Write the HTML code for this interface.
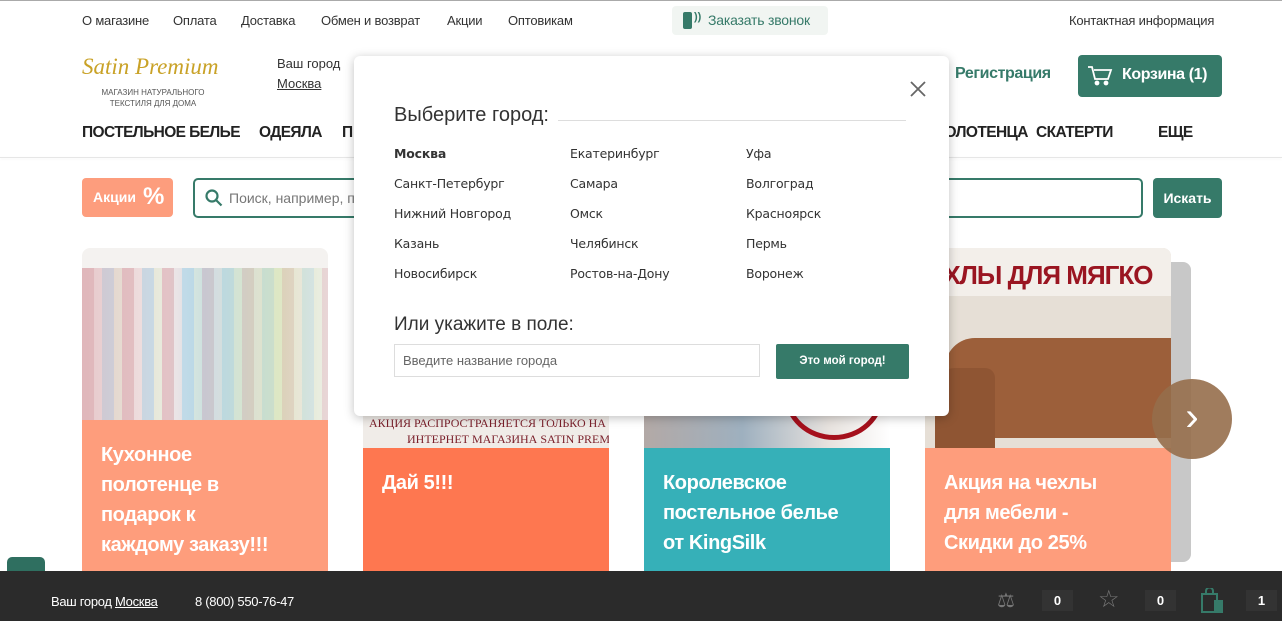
<!DOCTYPE html>
<html><head><meta charset="utf-8"><style>
*{margin:0;padding:0;box-sizing:border-box}
body{width:1282px;height:621px;overflow:hidden;position:relative;background:#fff;font-family:"Liberation Sans",sans-serif;color:#333}
.a{position:absolute;white-space:nowrap}
.top{font-size:13px;color:#333;top:13px;letter-spacing:-0.2px}
.nav{font-size:15.5px;font-weight:bold;color:#222;top:124px;letter-spacing:-0.6px}
.card{position:absolute;top:248px;width:246px;height:330px;border-radius:8px 8px 0 0;overflow:hidden}
.card .t{position:absolute;left:0;right:0;bottom:0;color:#fff;font-weight:bold;font-size:20px;line-height:30px;padding:20px 19px;letter-spacing:-0.4px;white-space:nowrap}
.city{position:absolute;font-family:"DejaVu Sans",sans-serif;font-size:12.5px;color:#333;white-space:nowrap;letter-spacing:-0.2px}
</style></head><body>
<div class="a" style="left:0;top:0;width:1282px;height:1px;background:#aaa"></div>
<div class="a top" style="left:82px">О магазине</div>
<div class="a top" style="left:173px">Оплата</div>
<div class="a top" style="left:241px">Доставка</div>
<div class="a top" style="left:321px">Обмен и возврат</div>
<div class="a top" style="left:447px">Акции</div>
<div class="a top" style="left:508px">Оптовикам</div>
<div class="a" style="left:672px;top:6px;width:156px;height:29px;background:#f1f5f2;border-radius:4px"></div>
<div class="a" style="left:683px;top:12px;width:9px;height:17px;background:#367a69;border-radius:2px"></div>
<div class="a" style="left:694px;top:11px;font-size:11px;color:#367a69;font-weight:bold">))</div>
<div class="a top" style="left:708px;color:#367a69;font-size:14px;top:12px">Заказать звонок</div>
<div class="a top" style="left:1069px">Контактная информация</div>

<div class="a" style="left:82px;top:54px;font-family:'Liberation Serif',serif;font-style:italic;font-size:23px;color:#c9a227">Satin Premium</div>
<div class="a" style="left:82px;top:87px;width:142px;text-align:center;font-size:8px;line-height:11px;color:#555">МАГАЗИН НАТУРАЛЬНОГО<br>ТЕКСТИЛЯ ДЛЯ ДОМА</div>
<div class="a" style="left:277px;top:56px;font-size:13px">Ваш город</div>
<div class="a" style="left:277px;top:76px;font-size:13px;text-decoration:underline">Москва</div>
<div class="a" style="left:955px;top:65px;font-size:16px;font-weight:bold;color:#367a69;letter-spacing:-0.4px">Регистрация</div>
<div class="a" style="left:1078px;top:55px;width:144px;height:42px;background:#367a69;border-radius:4px"></div>
<svg class="a" style="left:1087px;top:65px" width="26" height="22" viewBox="0 0 26 22" fill="none" stroke="#fff" stroke-width="1.8"><path d="M1 2h4l3 12h13l3-9H7"/><circle cx="10" cy="18" r="1.5" fill="#fff"/><circle cx="19" cy="18" r="1.5" fill="#fff"/></svg>
<div class="a" style="left:1122px;top:66px;font-size:16px;font-weight:bold;color:#fff;letter-spacing:-0.4px">Корзина (1)</div>

<div class="a nav" style="left:82px">ПОСТЕЛЬНОЕ БЕЛЬЕ</div>
<div class="a nav" style="left:259px">ОДЕЯЛА</div>
<div class="a nav" style="left:342px">П</div>
<div class="a nav" style="left:934px">ПОЛОТЕНЦА</div>
<div class="a nav" style="left:1036px">СКАТЕРТИ</div>
<div class="a nav" style="left:1158px">ЕЩЕ</div>
<div class="a" style="left:0;top:157px;width:1282px;height:1px;background:#e6e6e6;box-shadow:0 1px 3px rgba(0,0,0,.06)"></div>

<div class="a" style="left:82px;top:178px;width:91px;height:39px;background:#fd9d7d;border-radius:4px"></div>
<div class="a" style="left:93px;top:189px;font-size:14px;font-weight:bold;color:#fff">Акции</div>
<div class="a" style="left:143px;top:183px;font-size:24px;font-weight:bold;color:#fff">%</div>
<div class="a" style="left:193px;top:178px;width:950px;height:40px;border:2px solid #367a69;border-radius:5px"></div>
<svg class="a" style="left:205px;top:189px" width="18" height="18" viewBox="0 0 18 18" fill="none" stroke="#367a69" stroke-width="2.2"><circle cx="7" cy="7" r="5.5"/><path d="M11 11l5.5 5.5"/></svg>
<div class="a" style="left:229px;top:190px;font-size:14px;color:#777">Поиск, например, п</div>
<div class="a" style="left:1153px;top:178px;width:69px;height:40px;background:#367a69;border-radius:4px;color:#fff;font-size:14px;font-weight:bold;text-align:center;line-height:40px">Искать</div>

<div class="card" style="left:82px;background:#f4f2f0"><div class="a" style="left:0;top:20px;width:246px;height:152px;background:repeating-linear-gradient(90deg,#e3c3c6 0 12px,#f1e6e6 12px 20px,#c7dde9 20px 32px,#e9edde 32px 40px)"></div><div class="a" style="left:0;top:20px;width:246px;height:152px;background:linear-gradient(90deg,rgba(220,170,175,.5),rgba(255,255,255,0) 35%,rgba(160,205,225,.4) 50%,rgba(210,225,170,.5) 80%,rgba(240,240,240,.4))"></div><div class="t" style="top:172px;background:#fe9d7c">Кухонное<br>полотенце в<br>подарок к<br>каждому заказу!!!</div></div>
<div class="card" style="left:363px;background:#f0ece8"><div class="a" style="left:6px;top:168px;font-family:'Liberation Serif',serif;font-size:12px;color:#7a1f2a">АКЦИЯ РАСПРОСТРАНЯЕТСЯ ТОЛЬКО НА КЛИ</div><div class="a" style="left:44px;top:184px;font-family:'Liberation Serif',serif;font-size:12px;color:#7a1f2a">ИНТЕРНЕТ МАГАЗИНА SATIN PREMIUM</div><div class="t" style="top:200px;background:#fe7750">Дай 5!!!</div></div>
<div class="card" style="left:644px;background:linear-gradient(90deg,#b3a9a6,#9eb0bf 40%,#e7e2de 75%,#fff)"><div class="a" style="left:140px;top:100px;width:100px;height:92px;border:5px solid #a5101c;border-radius:50%"></div><div class="t" style="top:200px;background:#36b0b8">Королевское<br>постельное белье<br>от KingSilk</div></div>
<div class="a" style="left:1171px;top:262px;width:20px;height:300px;background:#c8c8c8;border-radius:0 8px 8px 0"></div>
<div class="card" style="left:925px;background:#e6dfd6"><div class="a" style="left:0;top:0;width:246px;height:48px;background:#f3efea"></div><div class="a" style="left:2px;top:12px;font-size:26px;font-weight:bold;color:#9a1521;letter-spacing:-1px">ЕХЛЫ ДЛЯ МЯГКО</div><div class="a" style="left:20px;top:90px;width:226px;height:100px;background:#9c5f3a;border-radius:30px 0 0 0"></div><div class="a" style="left:10px;top:120px;width:60px;height:80px;background:#8f5533;border-radius:20px 10px 0 0"></div><div class="t" style="top:200px;background:#fe9d7c">Акция на чехлы<br>для мебели -<br>Скидки до 25%</div></div>
<div class="a" style="left:1152px;top:379px;width:80px;height:80px;border-radius:50%;background:rgba(150,110,75,.9);color:#fff;font-size:40px;text-align:center;line-height:76px">&#x203A;</div>

<div class="a" style="left:7px;top:557px;width:38px;height:20px;background:#2f6f60;border-radius:5px 5px 0 0"></div>
<div class="a" style="left:0;top:571px;width:1282px;height:50px;background:#2b2b2b"></div>
<div class="a" style="left:51px;top:594px;font-size:13px;color:#fff;letter-spacing:-0.3px">Ваш город <u>Москва</u></div>
<div class="a" style="left:195px;top:594px;font-size:13px;color:#fff;letter-spacing:-0.3px">8 (800) 550-76-47</div>
<div class="a" style="left:997px;top:588px;font-size:20px;color:#777">⚖</div>
<div class="a" style="left:1042px;top:590px;width:31px;height:21px;background:#333;color:#fff;font-size:13px;font-weight:bold;text-align:center;line-height:21px">0</div>
<div class="a" style="left:1098px;top:585px;font-size:24px;color:#777">☆</div>
<div class="a" style="left:1145px;top:590px;width:31px;height:21px;background:#333;color:#fff;font-size:13px;font-weight:bold;text-align:center;line-height:21px">0</div>
<svg class="a" style="left:1201px;top:588px" width="24" height="26" viewBox="0 0 24 26"><rect x="1" y="6" width="15" height="18" fill="none" stroke="#367a69" stroke-width="2"/><path d="M5 6V3a3.5 3.5 0 0 1 7 0v3" fill="none" stroke="#367a69" stroke-width="2"/><rect x="13" y="12" width="9" height="13" fill="#367a69"/></svg>
<div class="a" style="left:1246px;top:590px;width:31px;height:21px;background:#333;color:#fff;font-size:13px;font-weight:bold;text-align:center;line-height:21px">1</div>

<div class="a" style="left:354px;top:56px;width:595px;height:360px;background:#fff;border-radius:6px;box-shadow:0 2px 10px rgba(0,0,0,.25)">
<div class="a" style="left:40px;top:48px;font-size:20px;color:#333">Выберите город:</div>
<div class="a" style="left:204px;top:64px;width:348px;height:1px;background:#ddd"></div>
<svg class="a" style="left:556px;top:25px" width="16" height="16" viewBox="0 0 16 16" stroke="#666" stroke-width="1.8"><path d="M1 1l14 14M15 1L1 15"/></svg>
<div class="city" style="left:40px;top:90px;font-weight:bold">Москва</div>
<div class="city" style="left:40px;top:120px">Санкт-Петербург</div>
<div class="city" style="left:40px;top:150px">Нижний Новгород</div>
<div class="city" style="left:40px;top:180px">Казань</div>
<div class="city" style="left:40px;top:210px">Новосибирск</div>
<div class="city" style="left:216px;top:90px">Екатеринбург</div>
<div class="city" style="left:216px;top:120px">Самара</div>
<div class="city" style="left:216px;top:150px">Омск</div>
<div class="city" style="left:216px;top:180px">Челябинск</div>
<div class="city" style="left:216px;top:210px">Ростов-на-Дону</div>
<div class="city" style="left:392px;top:90px">Уфа</div>
<div class="city" style="left:392px;top:120px">Волгоград</div>
<div class="city" style="left:392px;top:150px">Красноярск</div>
<div class="city" style="left:392px;top:180px">Пермь</div>
<div class="city" style="left:392px;top:210px">Воронеж</div>
<div class="a" style="left:40px;top:258px;font-size:19px;color:#333">Или укажите в поле:</div>
<div class="a" style="left:40px;top:288px;width:366px;height:33px;border:1px solid #ddd"></div>
<div class="a" style="left:49px;top:297px;font-size:13px;color:#666">Введите название города</div>
<div class="a" style="left:422px;top:288px;width:133px;height:35px;background:#367a69;border-radius:2px;color:#fff;font-size:11.5px;font-weight:bold;text-align:center;line-height:35px">Это мой город!</div>
</div>
</body></html>
